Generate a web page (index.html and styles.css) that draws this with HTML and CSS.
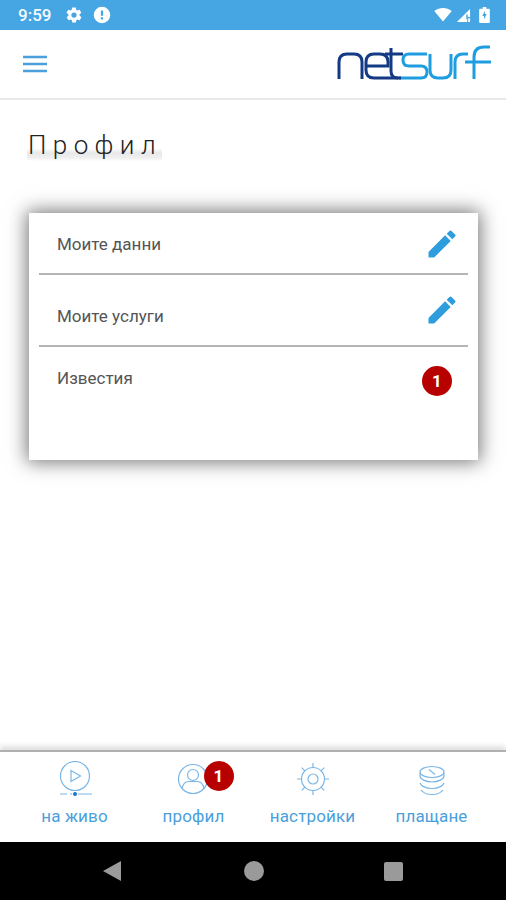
FILE: index.html
```html
<!DOCTYPE html>
<html lang="bg">
<head>
<meta charset="utf-8">
<title>Профил</title>
<link rel="stylesheet" href="styles.css">
</head>
<body>
<div class="app">
  <div class="statusbar">
    <span class="clock">9:59</span>
    <svg class="st-icon gear" viewBox="0 0 24 24"><path fill="#fff" d="M19.4 13c.1-.3.1-.7.1-1s0-.7-.1-1l2.100-1.600c.2-.2.2-.4.1-.6l-2-3.500c-.1-.2-.4-.3-.6-.2l-2.500 1c-.5-.4-1.100-.7-1.700-1l-.4-2.600c0-.3-.2-.5-.5-.5h-4c-.3 0-.5.2-.5.4l-.4 2.700c-.6.2-1.200.6-1.700 1l-2.500-1c-.2-.1-.5 0-.6.2l-2 3.500c-.1.2-.1.500.1.600L4.600 11c-.1.300-.1.700-.1 1s0 .7.1 1l-2.100 1.600c-.2.2-.2.4-.1.6l2 3.500c.1.2.4.3.6.2l2.500-1c.5.4 1.100.7 1.700 1l.4 2.600c0 .3.2.5.5.5h4c.3 0 .5-.2.5-.4l.4-2.700c.6-.2 1.200-.6 1.700-1l2.500 1c.2.1.5 0 .6-.2l2-3.500c.1-.2.1-.5-.1-.6zM12 15.500a3.500 3.500 0 1 1 0-7 3.500 3.500 0 0 1 0 7z"/></svg>
    <svg class="st-icon alert" viewBox="0 0 24 24"><path fill="#fff" d="M12 1a11 11 0 1 0 0 22 11 11 0 0 0 0-22zm1.500 17h-3v-3h3zm0-5h-3V6h3z"/></svg>
    <span class="spacer"></span>
    <svg class="st-wifi" viewBox="0 0 20 16"><path fill="#fff" d="M10 15.500 0 3.500C3 1.300 6.300 0 10 0s7 1.300 10 3.500z"/></svg>
    <svg class="st-signal" viewBox="0 0 16 16"><path fill="#fff" d="M15 1v8h-3v6H1z"/><path fill="#46a5e3" d="M11 7h1.500v5H11z"/><path fill="#fff" d="M13 11h2v4h-2zM13 6h2v3.500h-2z"/></svg>
    <svg class="st-batt" viewBox="0 0 12 18"><path fill="#fff" d="M4 0h4v2h3a1 1 0 0 1 1 1v14a1 1 0 0 1-1 1H1a1 1 0 0 1-1-1V3a1 1 0 0 1 1-1h3z"/><path fill="#46a5e3" d="M6.800 4 3.500 10h2v4l3-6h-2z"/></svg>
  </div>

  <header class="topbar">
    <svg class="menu" viewBox="0 0 24 18"><path d="M0 2h24M0 9h24M0 16h24"/></svg>
    <svg class="logo" viewBox="0 0 154 36" role="img" aria-label="netsurf">
      <g fill="none" stroke-width="3">
        <path stroke="#1e9ee0" d="M90 9H72Q66 9 66 15T72 21H84Q90 21 90 27T84 33H62"/>
        <path stroke="#1e9ee0" d="M93 9V25Q93 33 101 33H106Q114 33 114 25V9"/>
        <path stroke="#1e9ee0" d="M118 34V17Q118 9 126 9H131"/>
        <path stroke="#1e9ee0" d="M137 34V12Q137 2 147 2H153M128 17H154"/>
        <path stroke="#143a85" d="M2 34V17Q2 9 10 9H17Q25 9 25 17V34"/>
        <path stroke="#143a85" d="M29 21H51V17Q51 9 43 9H37Q29 9 29 17V25Q29 33 37 33H64"/>
        <path stroke="#143a85" d="M54 3V26Q54 33 61 33M48 9H66"/>
      </g>
    </svg>
  </header>

  <main class="content">
    <h1 class="title">Профил</h1>
    <section class="card">
      <div class="row">
        <span class="row-label">Моите данни</span>
        <svg class="pencil" viewBox="0 0 24 24"><path d="M3 17.250V21h3.750L17.810 9.940l-3.750-3.750zM20.710 7.040a1 1 0 0 0 0-1.410l-2.340-2.340a1 1 0 0 0-1.410 0l-1.830 1.830 3.750 3.750z"/></svg>
      </div>
      <div class="row">
        <span class="row-label">Моите услуги</span>
        <svg class="pencil" viewBox="0 0 24 24"><path d="M3 17.250V21h3.750L17.810 9.940l-3.750-3.750zM20.710 7.040a1 1 0 0 0 0-1.410l-2.340-2.340a1 1 0 0 0-1.410 0l-1.830 1.830 3.750 3.750z"/></svg>
      </div>
      <div class="row row-last">
        <span class="row-label">Известия</span>
        <span class="badge">1</span>
      </div>
    </section>
  </main>

  <nav class="tabs">
    <div class="tab">
      <svg class="tab-icon" viewBox="0 0 36 36">
        <circle cx="18" cy="15" r="14.500"/>
        <path d="M14 9.500v11l9.500-5.500z"/>
        <path d="M3 33h7M13 33h2M21 33h14"/>
        <circle class="dot" cx="18" cy="33" r="2"/>
      </svg>
      <span class="tab-label">на живо</span>
    </div>
    <div class="tab">
      <span class="tab-icon-wrap">
        <svg class="tab-icon" viewBox="0 0 36 36">
          <circle cx="17" cy="18" r="14.500"/>
          <circle cx="17" cy="14" r="5.500"/>
          <path d="M6 28q1-7.500 7-7.500h8q6 0 7 7.500"/>
        </svg>
        <span class="badge badge-tab">1</span>
      </span>
      <span class="tab-label">профил</span>
    </div>
    <div class="tab">
      <svg class="tab-icon" viewBox="0 0 36 36">
        <circle cx="18" cy="18" r="11.500"/>
        <circle cx="18" cy="18" r="5"/>
        <path d="M18 2v4.500M18 29.500V34M2 18h4.500M29.500 18H34M6.700 6.700l3.200 3.200M26.100 26.100l3.200 3.200M29.300 6.700l-3.200 3.200M9.900 26.100l-3.200 3.200"/>
      </svg>
      <span class="tab-label">настройки</span>
    </div>
    <div class="tab">
      <svg class="tab-icon" viewBox="0 -2 36 36">
        <ellipse cx="18" cy="9" rx="12" ry="5.500"/>
        <path d="M6 10v3c0 3 5.500 6 12 6s12-3 12-6v-3M6 20c1 3 6 5.500 12 5.500S29 23 30 20M7 27c2 2.800 6 4.500 11 4.500s9-1.700 11-4.500"/>
        <path d="M15 6.500l6 5M15.500 7h.5M20.500 11h.5"/>
      </svg>
      <span class="tab-label">плащане</span>
    </div>
  </nav>

  <div class="navbar">
    <span class="nav-back"></span>
    <span class="nav-home"></span>
    <span class="nav-recent"></span>
  </div>
</div>
</body>
</html>
```
FILE: styles.css
```css
* { box-sizing: border-box; }
html, body { margin: 0; padding: 0; background: #fff; }
body { font-family: Roboto, "Noto Sans", sans-serif; }
.app { width: 506px; height: 900px; display: flex; flex-direction: column; overflow: hidden; }

.statusbar { height: 30px; background: #46a5e3; display: flex; align-items: center; padding: 0 16px 0 18px; color: #fff; flex: none; }
.clock { font-size: 17px; font-weight: 500; width: 38px; opacity: .95; }
.st-icon { width: 18px; height: 18px; display: block; }
.gear { margin-left: 9px; }
.alert { margin-left: 10px; }
.spacer { flex: 1; }
.st-wifi { width: 18px; height: 14px; margin-right: 4px; }
.st-signal { width: 15px; height: 15px; margin-right: 8px; }
.st-batt { width: 11px; height: 16px; }

.topbar { height: 70px; flex: none; display: flex; align-items: center; justify-content: space-between; padding: 0 15px 0 23px; border-bottom: 2px solid #e8e8e8; }
.menu { width: 24px; height: 18px; fill: none; stroke: #4a9fdc; stroke-width: 2.600; }
.logo { width: 154px; height: 36px; margin-top: -2px; }

.content { flex: 1; min-height: 0; padding: 29px 28px 0 29px; }
.title { margin: 0 0 0 -2px; padding-left: 1px; width: max-content; font-size: 26px; font-weight: 300; line-height: 32px; letter-spacing: 6.400px; color: #222; background: linear-gradient(to bottom, transparent 60%, #e8e8e8 75%, #efefef 90%, transparent); }
.card { margin-top: 52px; height: 247px; background: #fff; box-shadow: 0 0 18px 2px rgba(0,0,0,.55); padding: 0 10px; display: flex; flex-direction: column; }
.row { display: flex; align-items: center; justify-content: space-between; padding: 1px 14px 0 18px; height: 62px; border-bottom: 2px solid #b5b5b5; flex: none; }
.row .pencil { margin-top: 1px; }
.row + .row { height: 72px; padding-top: 12px; }
.row + .row .pencil { margin: 0 -6px 12px 0; }
.row-last.row { flex: 1; border-bottom: 0; align-items: flex-start; padding-top: 20px; padding-right: 15px; }
.row-label { font-size: 17px; color: #555; }
.row-last .row-label { margin-top: 1px; }
.pencil { width: 36px; height: 36px; fill: #2e9ddd; margin-right: -6px; }

.badge { width: 30px; height: 30px; border-radius: 50%; background: #b70000; color: #fff; font-size: 17px; font-weight: 700; display: flex; align-items: center; justify-content: center; }
.row-last .badge { margin: -1px 1px 0 0; }

.tabs { height: 92px; flex: none; display: grid; grid-template-columns: repeat(4, 119px); border-top: 2px solid #b0b0b0; box-shadow: 0 -4px 5px rgba(0,0,0,.12); padding: 9px 0 0 15px; }
.tab { display: flex; flex-direction: column; align-items: center; gap: 9px; }
.tab-icon-wrap { position: relative; display: block; height: 36px; }
.tab-icon { width: 36px; height: 36px; fill: none; stroke: #7ab7e6; stroke-width: 1.200; display: block; }
.dot { fill: #1976c8; stroke: none; }
.tab-label { font-size: 17px; line-height: 20px; color: #4a9fdc; letter-spacing: .15px; }
.badge-tab { position: absolute; left: 28px; top: 0; }

.navbar { height: 58px; flex: none; background: #000; display: flex; align-items: center; padding-left: 103px; }
.nav-back { width: 0; height: 0; border-style: solid; border-width: 10.500px 18px 10.500px 0; border-color: transparent #9a9a9a transparent transparent; margin-right: 123px; }
.nav-home { width: 20px; height: 20px; border-radius: 50%; background: #9a9a9a; margin-right: 120px; }
.nav-recent { width: 19px; height: 19px; border-radius: 2px; background: #9a9a9a; }
```
